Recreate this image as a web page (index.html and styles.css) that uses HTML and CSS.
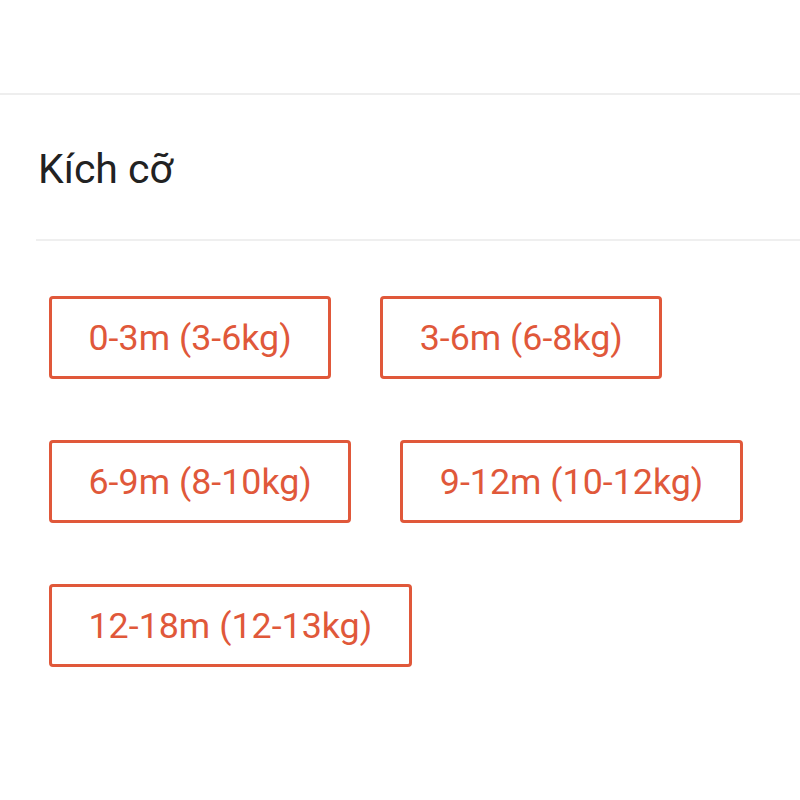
FILE: index.html
```html
<!DOCTYPE html>
<html lang="vi">
<head>
<meta charset="utf-8">
<link rel="stylesheet" href="styles.css">
</head>
<body>
<div class="page">
  <div class="top-space"></div>
  <section class="section">
    <h2 class="title">Kích cỡ</h2>
    <div class="options">
      <div class="row">
        <button class="opt">0-3m (3-6kg)</button>
        <button class="opt">3-6m (6-8kg)</button>
      </div>
      <div class="row">
        <button class="opt">6-9m (8-10kg)</button>
        <button class="opt">9-12m (10-12kg)</button>
      </div>
      <div class="row">
        <button class="opt">12-18m (12-13kg)</button>
      </div>
    </div>
  </section>
</div>
</body>
</html>
```

FILE: styles.css
```css
html, body {
  margin: 0;
  padding: 0;
  background: #ffffff;
}
.page {
  width: 800px;
  height: 800px;
  font-family: Roboto, "Noto Sans", sans-serif;
  overflow: hidden;
}
.top-space {
  height: 93px;
  border-bottom: 2px solid #eeeeee;
}
.section {
  padding-left: 36px;
}
.title {
  margin: 0;
  padding: 0 0 0 2px;
  line-height: 148px;
  font-size: 41px;
  font-weight: 400;
  color: #222222;
  border-bottom: 2px solid #efefef;
  box-sizing: border-box;
  height: 146px;
}
.options {
  padding: 55px 0 0 13px;
  display: flex;
  flex-direction: column;
  gap: 61px;
}
.row {
  display: flex;
  gap: 49px;
}
.opt {
  height: 83px;
  padding: 0 36.5px;
  background: #ffffff;
  border: 3px solid #e0583a;
  border-radius: 4px;
  color: #e0583a;
  font-family: Roboto, "Noto Sans", sans-serif;
  font-size: 35.8px;
  font-weight: 400;
  box-sizing: border-box;
}
```
